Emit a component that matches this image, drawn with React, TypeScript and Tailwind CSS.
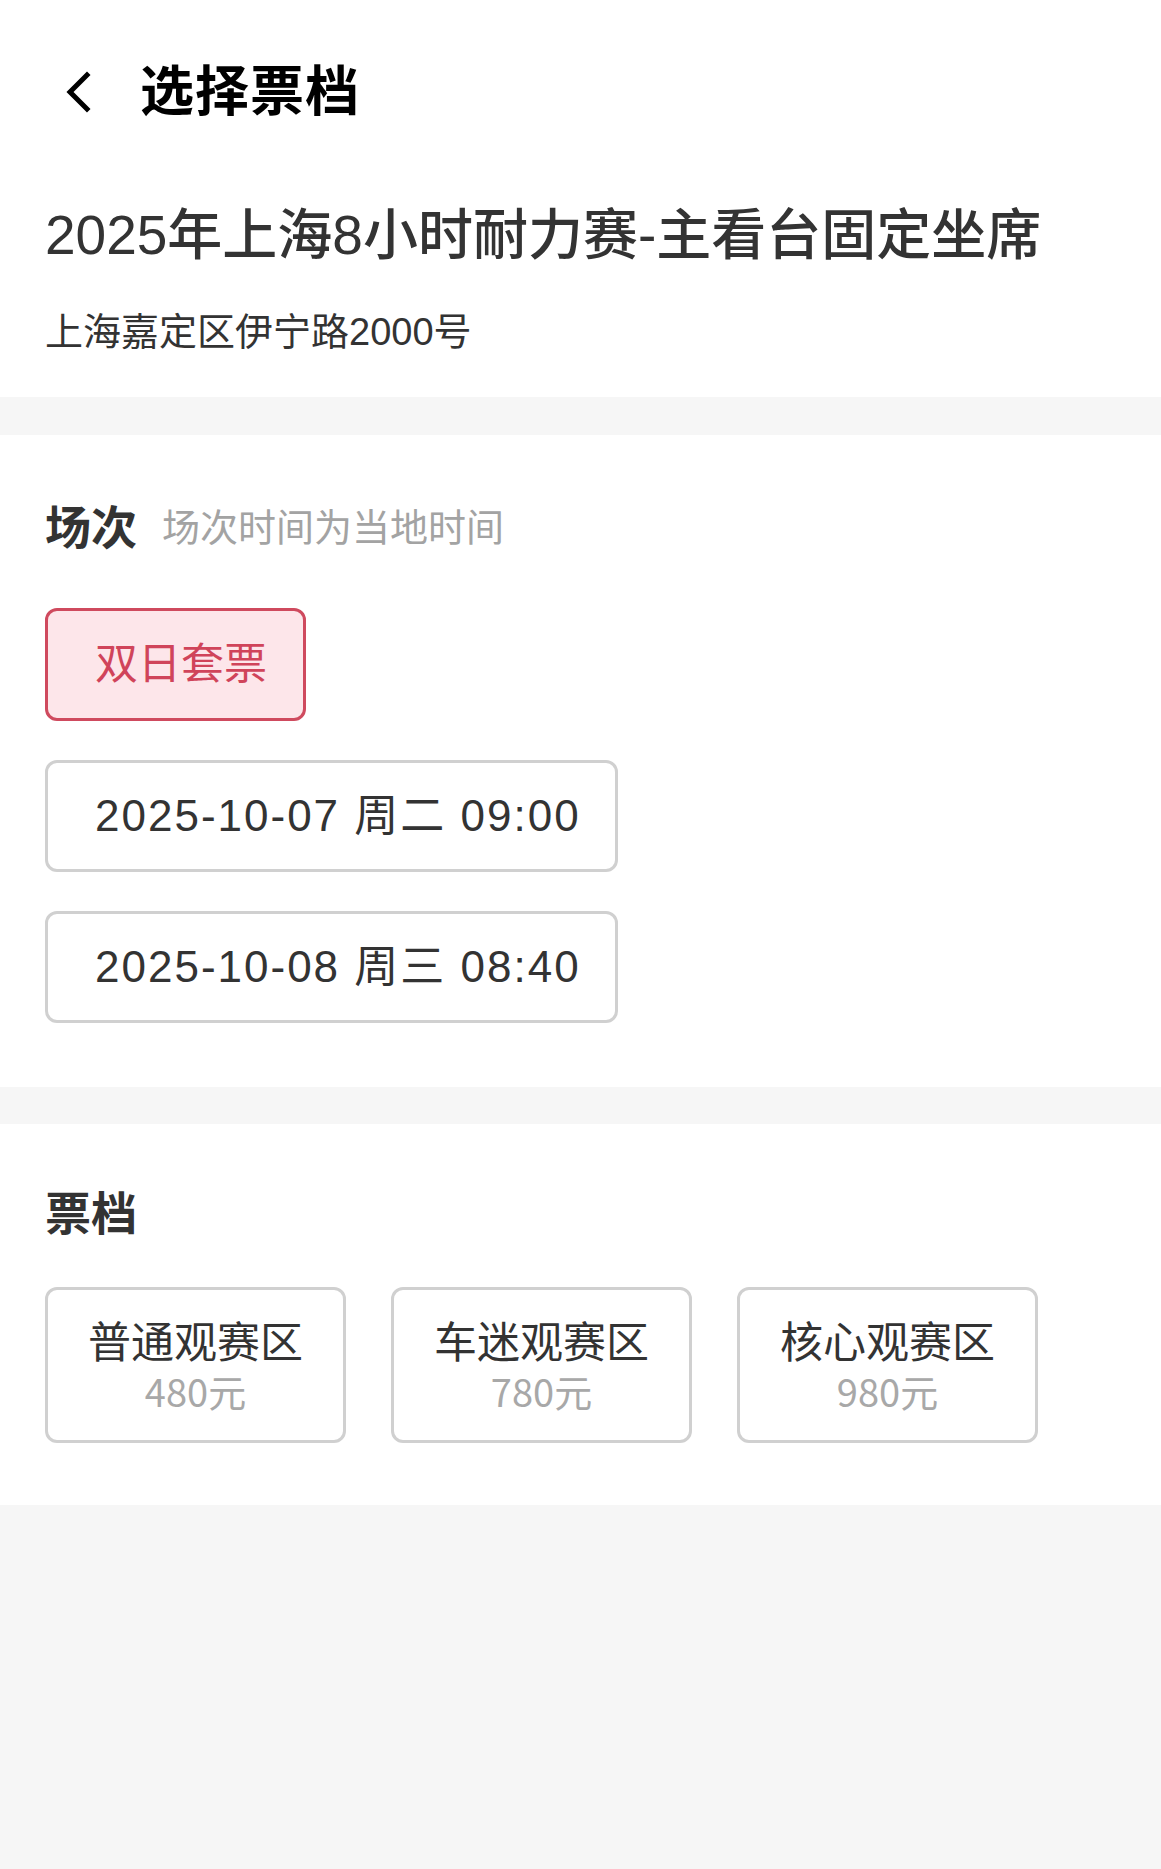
import { useState } from 'react'

const sessions = ['双日套票', '2025-10-07 周二 09:00', '2025-10-08 周三 08:40']

const tiers = [
  { name: '普通观赛区', price: '480元' },
  { name: '车迷观赛区', price: '780元' },
  { name: '核心观赛区', price: '980元' },
]

export default function App() {
  const [session, setSession] = useState(0)
  const [tier, setTier] = useState<number | null>(null)

  return (
    <div
      className="min-h-[1869px] bg-[#f6f6f6]"
      style={{ fontFamily: '"Liberation Sans", "Noto Sans CJK SC", sans-serif' }}
    >
      {/* Header */}
      <header className="h-[184px] bg-white flex items-center">
        <button className="ml-[64px] w-[28px] h-[44px] flex items-center justify-center">
          <svg width="26" height="42" viewBox="0 0 26 42" fill="none">
            <polyline
              points="22,4 5,21 22,38"
              stroke="#000"
              strokeWidth="5"
              strokeLinecap="square"
              strokeLinejoin="miter"
            />
          </svg>
        </button>
        <h1 className="ml-[48px] text-[54px] leading-none font-bold text-black tracking-[1px]">选择票档</h1>
      </header>

      {/* Event info */}
      <div className="bg-white px-[45px] pt-[16px] pb-[41px]">
        <h2 className="text-[55px] leading-[70px] font-medium text-[#333]">
          2025年上海8小时耐力赛-主看台固定坐席
        </h2>
        <p className="mt-[38px] text-[38px] leading-[48px] text-[#333]">上海嘉定区伊宁路2000号</p>
      </div>

      {/* Sessions */}
      <section className="mt-[38px] bg-white px-[45px] pt-[63px] pb-[64px]">
        <div className="flex items-center h-[60px]">
          <span className="text-[46px] font-bold text-[#333]">场次</span>
          <span className="ml-[25px] text-[38px] text-[#a3a3a3]">场次时间为当地时间</span>
        </div>
        <div className="mt-[50px] flex flex-col items-start gap-[39px]">
          {sessions.map((s, i) => (
            <button
              key={s}
              onClick={() => setSession(i)}
              className={
                i === session
                  ? 'h-[113px] pl-[47px] pr-[36px] rounded-[12px] border-[3px] border-[#cf4a5e] bg-[#fde6ea] text-[43px] text-[#d0445a]'
                  : 'h-[112px] pl-[47px] pr-[34px] rounded-[12px] border-[3px] border-[#d0d0d0] bg-white text-[44px] tracking-[2px] text-[#333]'
              }
            >
              {s}
            </button>
          ))}
        </div>
      </section>

      {/* Ticket tiers */}
      <section className="mt-[37px] bg-white px-[45px] pt-[60px] pb-[62px]">
        <div className="h-[60px] flex items-center">
          <span className="text-[46px] font-bold text-[#333]">票档</span>
        </div>
        <div className="mt-[43px] flex gap-[45px]">
          {tiers.map((t, i) => (
            <button
              key={t.name}
              onClick={() => setTier(i)}
              className={
                tier === i
                  ? 'w-[301px] h-[156px] rounded-[12px] border-[3px] border-[#cf4a5e] bg-[#fde6ea] flex flex-col items-center justify-center'
                  : 'w-[301px] h-[156px] rounded-[12px] border-[3px] border-[#d0d0d0] bg-white flex flex-col items-center justify-center'
              }
            >
              <span className="block text-[43px] leading-[52px] text-[#333]">{t.name}</span>
              <span
                className="block text-[38px] leading-[44px] text-[#a8a8a8]"
                style={{ fontFamily: '"Noto Sans CJK SC", sans-serif' }}
              >
                {t.price}
              </span>
            </button>
          ))}
        </div>
      </section>
    </div>
  )
}
